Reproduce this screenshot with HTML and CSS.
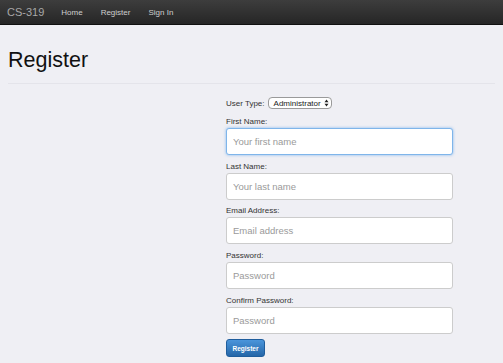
FILE: index.html
```html
<!DOCTYPE html>
<html lang="en">
<head>
    <meta charset="UTF-8">
    <title>Register</title>
    <link rel="stylesheet" href="styles.css">
</head>
<body>
<div class="navbar">
    <span class="brand">CS-319</span>
    <a class="nav-link" href="#">Home</a>
    <a class="nav-link" href="#">Register</a>
    <a class="nav-link" href="#">Sign In</a>
</div>

<div class="container">
    <div class="page-header">
        <h1>Register</h1>
    </div>

    <form class="register-form">
        <div class="type-row">
            <span class="label-inline">User Type:</span>
            <span class="fake-select">
                Administrator
                <svg width="5" height="8" viewBox="0 0 5 8"><path d="M0.5 3.2 L2.5 0.6 L4.5 3.2 Z M0.5 4.8 L2.5 7.4 L4.5 4.8 Z" fill="#222"/></svg>
            </span>
        </div>

        <label for="first-name">First Name:</label>
        <input id="first-name" class="focused" type="text" placeholder="Your first name">

        <label for="last-name">Last Name:</label>
        <input id="last-name" type="text" placeholder="Your last name">

        <label for="email">Email Address:</label>
        <input id="email" type="text" placeholder="Email address">

        <label for="password">Password:</label>
        <input id="password" type="password" placeholder="Password">

        <label for="confirm">Confirm Password:</label>
        <input id="confirm" type="password" placeholder="Password">

        <button type="button" class="btn">Register</button>
    </form>
</div>
</body>
</html>
```

FILE: styles.css
```css
body {
    margin: 0;
    background-color: #efeff4;
    font-family: 'Liberation Sans', Arial, sans-serif;
    color: #333;
}

.navbar {
    height: 24px;
    display: flex;
    align-items: center;
    padding-left: 7px;
    background: linear-gradient(#3d3d3d, #262626);
    border-bottom: 1px solid #111;
}

.brand {
    font-size: 11px;
    color: #a8a8a8;
    margin-right: 17px;
}

.nav-link {
    font-size: 8px;
    color: #cfcfcf;
    text-decoration: none;
    margin-right: 18px;
}

.container {
    padding: 0 8px;
}

.page-header {
    border-bottom: 1px solid #e4e4ea;
    padding-top: 22px;
    height: 36px;
}

h1 {
    margin: 0;
    font-size: 21.5px;
    font-weight: normal;
    line-height: 26px;
    color: #111;
}

.register-form {
    margin-left: 218px;
    width: 227px;
    padding-top: 13px;
    display: flex;
    flex-direction: column;
    align-items: flex-start;
}

.type-row {
    display: flex;
    align-items: center;
    height: 12px;
    margin-bottom: 7px;
    font-size: 8px;
}

.label-inline {
    margin-right: 3px;
}

.fake-select {
    display: flex;
    align-items: center;
    gap: 3px;
    height: 10px;
    padding: 0 2px 0 5px;
    border: 1px solid #9a9a9a;
    border-radius: 4px;
    background: #fff;
    font-size: 8px;
    color: #222;
}

label {
    font-size: 8px;
    line-height: 11px;
    margin-bottom: 1px;
}

input {
    box-sizing: border-box;
    width: 227px;
    height: 27px;
    margin: 0 0 5.7px 0;
    padding: 0 6px;
    border: 1px solid #ccc;
    border-radius: 3px;
    background: #fff;
    font-family: inherit;
    font-size: 9.5px;
    color: #333;
}

input::placeholder {
    color: #9a9a9a;
}

input.focused {
    border-color: #7fb5ea;
    box-shadow: 0 0 3px rgba(82, 158, 236, 0.7);
}

.btn {
    width: 39px;
    height: 18px;
    padding: 0;
    border: 1px solid #1f5d9c;
    border-radius: 3px;
    background: linear-gradient(#4a95db, #2566a8);
    color: #fff;
    font-family: inherit;
    font-size: 6.5px;
    font-weight: bold;
}
```
